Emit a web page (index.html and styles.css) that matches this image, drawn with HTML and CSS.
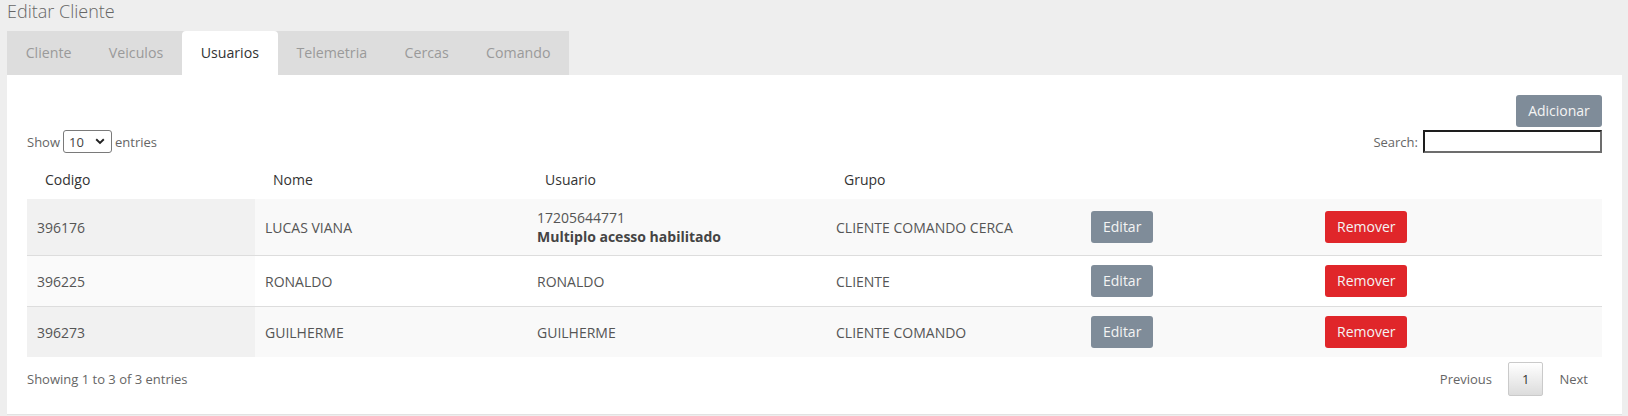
FILE: index.html
```html
<!DOCTYPE html>
<html lang="pt">
<head>
<meta charset="utf-8">
<title>Editar Cliente</title>
<link rel="stylesheet" href="styles.css">
</head>
<body>
<div class="page">
  <h1 class="title">Editar Cliente</h1>
  <ul class="tabs">
    <li class="tab">Cliente</li>
    <li class="tab">Veiculos</li>
    <li class="tab active">Usuarios</li>
    <li class="tab">Telemetria</li>
    <li class="tab">Cercas</li>
    <li class="tab">Comando</li>
  </ul>
  <div class="panel">
    <div class="toolbar">
      <button class="btn btn-slate btn-add">Adicionar</button>
    </div>
    <div class="dt-top">
      <div class="dt-length">
        <span>Show</span>
        <span class="fake-select"><span class="fs-val">10</span><svg class="chev" width="10" height="7" viewBox="0 0 10 7"><path d="M1.2 1.3 L5 5 L8.8 1.3" fill="none" stroke="#222" stroke-width="1.9"/></svg></span>
        <span>entries</span>
      </div>
      <div class="dt-filter">
        <label>Search:</label>
        <input class="search" type="text">
      </div>
    </div>
    <table class="dt">
      <colgroup>
        <col class="c1"><col class="c2"><col class="c3"><col class="c4"><col class="c5"><col class="c6">
      </colgroup>
      <thead>
        <tr><th>Codigo</th><th>Nome</th><th>Usuario</th><th>Grupo</th><th></th><th></th></tr>
      </thead>
      <tbody>
        <tr class="odd">
          <td class="sorted">396176</td>
          <td>LUCAS VIANA</td>
          <td>17205644771<br><b>Multiplo acesso habilitado</b></td>
          <td>CLIENTE COMANDO CERCA</td>
          <td><button class="btn btn-slate btn-edit">Editar</button></td>
          <td><button class="btn btn-red btn-rm">Remover</button></td>
        </tr>
        <tr class="even">
          <td class="sorted">396225</td>
          <td>RONALDO</td>
          <td>RONALDO</td>
          <td>CLIENTE</td>
          <td><button class="btn btn-slate btn-edit">Editar</button></td>
          <td><button class="btn btn-red btn-rm">Remover</button></td>
        </tr>
        <tr class="odd">
          <td class="sorted">396273</td>
          <td>GUILHERME</td>
          <td>GUILHERME</td>
          <td>CLIENTE COMANDO</td>
          <td><button class="btn btn-slate btn-edit">Editar</button></td>
          <td><button class="btn btn-red btn-rm">Remover</button></td>
        </tr>
      </tbody>
    </table>
    <div class="dt-bottom">
      <div class="dt-info">Showing 1 to 3 of 3 entries</div>
      <div class="dt-paginate">
        <span class="pg">Previous</span>
        <span class="pg current">1</span>
        <span class="pg">Next</span>
      </div>
    </div>
  </div>
</div>
</body>
</html>
```
FILE: styles.css
```css
* { box-sizing: border-box; }
html, body { margin: 0; padding: 0; }
body {
  background: #eeeeee;
  font-family: "Open Sans", "Liberation Sans", sans-serif;
  color: #555;
  width: 1628px;
  height: 416px;
  overflow: hidden;
}
.page { padding: 0 6px 0 7px; }
.title {
  margin: 0 0 8px 0;
  font-size: 18px;
  font-weight: 300;
  line-height: 23px;
  color: #666;
  height: 23px;
}
.tabs {
  list-style: none;
  margin: 0;
  padding: 0;
  display: inline-flex;
  background: #dddddd;
  height: 44px;
  vertical-align: top;
}
.tab {
  padding: 0 18.7px;
  line-height: 44px;
  font-size: 14.2px;
  color: #9a9a9a;
}
.tab.active {
  background: #fff;
  color: #333;
  border-radius: 4px 4px 0 0;
}
.panel {
  background: #fff;
  padding: 20px 20px 19px 20px;
  border-bottom: 1px solid #e2e2e2;
  height: 340px;
}
.toolbar { display: flex; justify-content: flex-end; }
.btn {
  font-family: "Open Sans", "Liberation Sans", sans-serif;
  font-size: 14px;
  border: 0;
  border-radius: 3px;
  color: #f4f4f4;
  height: 32px;
  padding: 0 12px;
  line-height: 32px;
}
.btn-slate { background: #7f8c99; }
.btn-red { background: #e0262a; }
.btn-add { width: 86px; height: 32px; }
.btn-edit { width: 62px; }
.btn-rm { width: 82px; }
.dt-top {
  display: flex;
  justify-content: space-between;
  align-items: center;
  margin-top: 3px;
  height: 23px;
  font-size: 13px;
  color: #666;
}
.dt-length { display: flex; align-items: center; gap: 3px; }
.fake-select {
  display: inline-flex;
  align-items: center;
  justify-content: space-between;
  width: 49px;
  height: 23px;
  border: 1px solid #7a7a7a;
  border-radius: 3px;
  padding: 0 6px 0 5px;
  color: #444;
  font-size: 13px;
}
.dt-filter { display: flex; align-items: center; gap: 5px; }
.search {
  width: 179px;
  height: 23px;
  border-style: solid;
  border-width: 2px;
  border-color: #1e1e1e #6d6d6d #6d6d6d #1e1e1e;
  padding: 0;
  margin: 0;
}
.dt {
  width: 100%;
  table-layout: fixed;
  border-collapse: collapse;
  margin-top: 7px;
}
.c1 { width: 228px; }
.c2 { width: 272px; }
.c3 { width: 299px; }
.c4 { width: 255px; }
.c5 { width: 234px; }
.c6 { width: 287px; }
.dt th {
  text-align: left;
  font-weight: normal;
  font-size: 14px;
  color: #333;
  padding: 10px 18px;
  line-height: 19px;
}
.dt td {
  font-size: 14px;
  line-height: 19px;
  padding: 9px 10px;
  color: #555;
  vertical-align: middle;
}
.dt td b { color: #444; }
.dt tbody tr + tr td { border-top: 1px solid #dddddd; }
.dt tr.odd td { background: #f9f9f9; }
.dt tr.odd td.sorted { background: #f1f1f1; }
.dt tr.even td { background: #ffffff; }
.dt tr.even td.sorted { background: #fafafa; }
.dt td .btn { display: block; }
.dt-bottom {
  display: flex;
  justify-content: space-between;
  align-items: center;
  margin-top: 5px;
  font-size: 13px;
  color: #666;
}
.dt-paginate { display: flex; align-items: center; }
.pg {
  padding: 6.5px 13px;
  line-height: 19px;
  border: 1px solid transparent;
  margin-left: 2px;
  color: #666;
  border-radius: 2px;
}
.pg.current {
  color: #333;
  border-color: #cacaca;
  background: linear-gradient(to bottom, #ffffff 0%, #dcdcdc 100%);
}
```
